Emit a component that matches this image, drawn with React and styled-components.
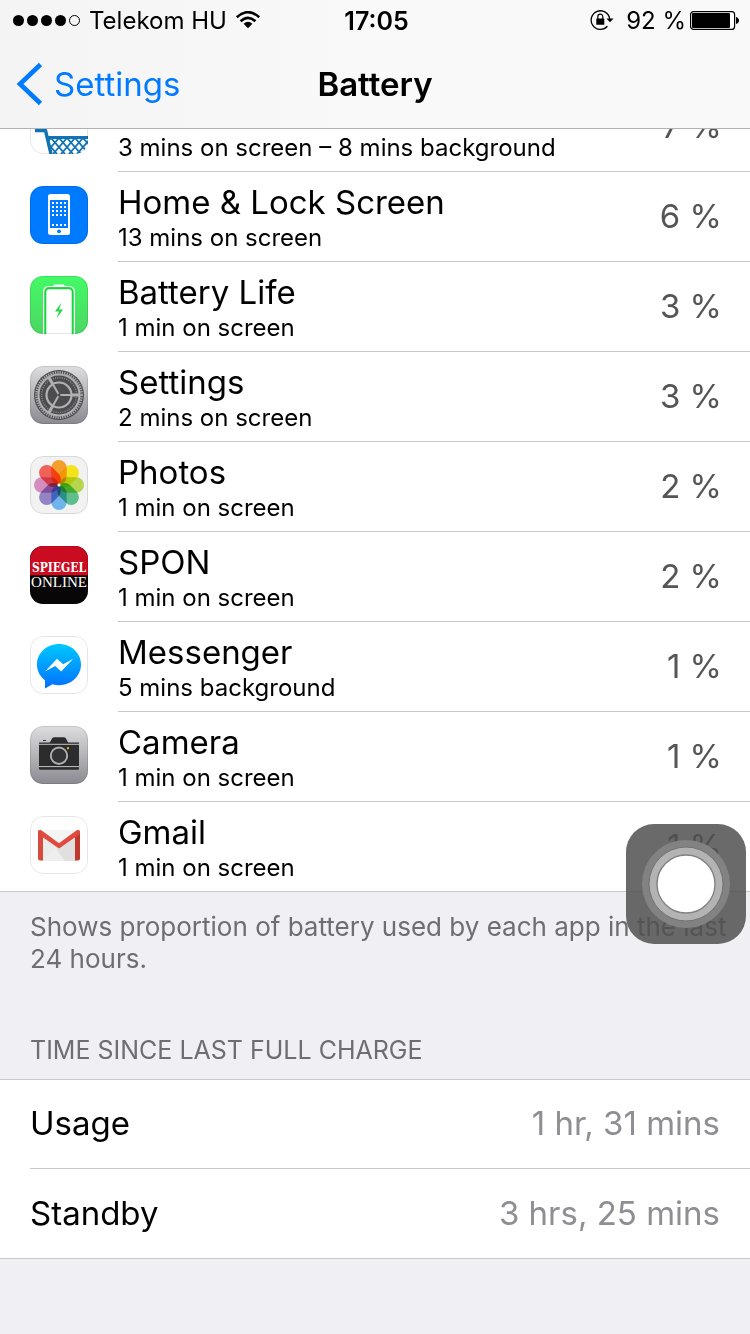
import React from 'react';
import styled, { createGlobalStyle } from 'styled-components';

const GlobalStyle = createGlobalStyle`
  * {
    box-sizing: border-box;
  }

  body {
    margin: 0;
    background-color: #efeff4;
    color: #000;
    font-family: Inter, 'Liberation Sans', sans-serif;
  }

  ul, dl, dd, h1, h2, p {
    margin: 0;
    padding: 0;
  }

  svg {
    display: block;
    flex-shrink: 0;
  }
`;

const Screen = styled.div`
  min-height: 100vh;
`;

const Header = styled.header`
  position: sticky;
  top: 0;
  z-index: 1;
  background: linear-gradient(90deg, #f4f4f4, #f9f9f9 50%);
  border-bottom: 1px solid #b2b2b2;
`;

const StatusBar = styled.div`
  display: grid;
  grid-template-columns: 1fr auto 1fr;
  align-items: center;
  height: 40px;
  padding: 2px 10px 0 13px;
  font-size: 24px;
  line-height: 38px;
`;

const StatusGroup = styled.div`
  display: flex;
  align-items: center;
  justify-content: ${props => (props.$end ? 'flex-end' : 'flex-start')};
  gap: ${props => (props.$end ? '4px' : '8px')};
`;

const ChargeLevel = styled.span`
  padding-left: 8px;
`;

const Clock = styled.time`
  font-size: 25px;
  font-weight: 600;
`;

const NavBar = styled.div`
  display: grid;
  grid-template-columns: 1fr auto 1fr;
  align-items: center;
  height: 88px;
  padding: 0 16px;
`;

const BackButton = styled.button`
  display: flex;
  align-items: center;
  gap: 10px;
  padding: 0;
  border: 0;
  background: none;
  color: #007aff;
  font-family: inherit;
  font-size: 33px;
  line-height: 40px;
`;

const Title = styled.h1`
  font-size: 33px;
  font-weight: 600;
  line-height: 40px;
`;

/* the list is scrolled so its first row sits half under the header */
const AppList = styled.ul`
  margin-top: -47px;
  background-color: #fff;
  border-bottom: 1px solid #c8c7cc;
  list-style: none;
`;

const AppRow = styled.li`
  display: flex;
  padding-left: 30px;
`;

const IconWrapper = styled.div`
  width: 58px;
  height: 58px;
  margin: 14px 30px 0 0;
  border-radius: 13px;
  overflow: hidden;
  position: relative;

  &::after {
    content: '';
    position: absolute;
    inset: 0;
    border: 1px solid rgba(0, 0, 0, 0.1);
    border-radius: 13px;
  }
`;

const AppBody = styled.div`
  flex: 1;
  display: flex;
  align-items: center;
  justify-content: space-between;
  height: 90px;
  padding: 2px 28px 0 0;
  border-bottom: 1px solid #c8c7cc;

  ${AppRow}:last-child & {
    height: 89px;
    border-bottom: 0;
  }
`;

const AppName = styled.div`
  min-height: 40px;
  font-size: 33px;
  line-height: 40px;
`;

const AppTime = styled.div`
  font-size: 24px;
  line-height: 32px;
`;

const Percent = styled.span`
  padding-bottom: 4px;
  color: #555;
  font-size: 33px;
  line-height: 40px;
`;

const FootNote = styled.p`
  padding: 19px 20px 0 30px;
  color: #6d6d72;
  font-size: 26px;
  line-height: 32px;
`;

const SectionTitle = styled.h2`
  padding: 59px 30px 12px;
  color: #6d6d72;
  font-size: 25px;
  font-weight: 400;
  line-height: 33px;
`;

const Details = styled.dl`
  padding-left: 30px;
  background-color: #fff;
  border-top: 1px solid #c8c7cc;
  border-bottom: 1px solid #c8c7cc;
`;

const DetailRow = styled.div`
  display: flex;
  align-items: center;
  justify-content: space-between;
  height: 89px;
  padding: 0 30px 2px 0;
  font-size: 33px;
  line-height: 40px;

  &:not(:last-child) {
    border-bottom: 1px solid #c8c7cc;
  }
`;

const DetailValue = styled.dd`
  color: #8e8e93;
`;

const AssistiveButton = styled.button`
  position: fixed;
  top: 824px;
  right: 4px;
  z-index: 2;
  width: 120px;
  height: 120px;
  padding: 0;
  border: 0;
  border-radius: 28px;
  background-color: rgba(80, 80, 80, 0.85);
`;

const CartIcon = () => (
  <svg width="58" height="58" viewBox="0 0 58 58">
    <clipPath id="basket">
      <path d="M17 41H58V58H21Z" />
    </clipPath>
    <rect width="58" height="58" fill="#fff" />
    <g fill="none" stroke="#1173b4">
      <path d="M5 34.500H15.500L21 58" strokeWidth="3.400" strokeLinejoin="round" />
      <path d="M17 41.500H58" strokeWidth="3" />
      <g clipPath="url(#basket)" strokeWidth="1.800">
        {[13, 21, 29, 37, 45, 53, 61, 69].map(x => (
          <path key={x} d={`M${x - 14} 58L${x} 42L${x + 14} 58`} />
        ))}
      </g>
    </g>
  </svg>
);

const HomeIcon = () => (
  <svg width="58" height="58" viewBox="0 0 58 58">
    <rect width="58" height="58" fill="#007aff" />
    <rect x="18" y="8" width="22" height="41" rx="2.500" fill="#fff" />
    <rect x="20" y="14" width="18" height="28" fill="#007aff" />
    {[16, 20, 24, 28, 38].map(y =>
      [22, 26, 30, 34].map(x => (
        <rect key={`${x}-${y}`} x={x} y={y} width="2" height="2" fill="#fff" />
      ))
    )}
    <circle cx="29" cy="45.300" r="1.900" fill="#007aff" />
  </svg>
);

const BatteryLifeIcon = () => (
  <svg width="58" height="58" viewBox="0 0 58 58">
    <defs>
      <linearGradient id="green" x2="0" y2="1">
        <stop offset="0" stopColor="#43fa66" />
        <stop offset="1" stopColor="#4cd663" />
      </linearGradient>
    </defs>
    <rect width="58" height="58" fill="url(#green)" />
    <path d="M23.500 10.500V9.500Q23.500 8.500 25 8.500H33Q34.500 8.500 34.500 9.500V10.500Z" fill="#fff" />
    <rect x="13.600" y="10.500" width="30.800" height="60" rx="5" fill="#31dd51" stroke="#fff" strokeWidth="1.200" />
    <rect x="15.600" y="12.500" width="26.800" height="60" rx="3.500" fill="#fff" stroke="#15d73c" strokeWidth="1.400" />
    <path d="M31.500 26.500L25 35.500h4l-2.500 7L33 33.500h-4z" fill="#22d548" />
  </svg>
);

const SettingsIcon = () => (
  <svg width="58" height="58" viewBox="0 0 58 58">
    <defs>
      <linearGradient id="steel" x2="0" y2="1">
        <stop offset="0" stopColor="#dedee1" />
        <stop offset="1" stopColor="#8a8a90" />
      </linearGradient>
    </defs>
    <rect width="58" height="58" fill="url(#steel)" />
    <circle cx="29" cy="29" r="25" fill="#4c4c4f" />
    <g fill="none" stroke="#b1b1b5">
      <circle cx="29" cy="29" r="22.600" strokeWidth="2.600" strokeDasharray="1.180 1.186" />
      <circle cx="29" cy="29" r="20.500" strokeWidth="2" />
      <circle cx="29" cy="29" r="17.400" strokeWidth="1.400" strokeDasharray="1 1.278" stroke="#8d8d91" />
      <circle cx="29" cy="29" r="12.500" strokeWidth="2.200" />
      {[0, 120, 240].map(angle => (
        <g key={angle} transform={`rotate(${angle} 29 29)`}>
          <path d="M29 29H41" strokeWidth="2" />
          <path d="M41 29H49" strokeWidth="3" />
        </g>
      ))}
    </g>
    <circle cx="29" cy="29" r="1.500" fill="#4c4c4f" />
  </svg>
);

const petals = [
  '#ffa82f',
  '#fff01d',
  '#bee253',
  '#62ca94',
  '#75bff8',
  '#9b8cd0',
  '#df96c9',
  '#ff665d',
];

const PhotosIcon = () => (
  <svg width="58" height="58" viewBox="0 0 58 58">
    <rect width="58" height="58" fill="#f2f2f2" />
    {petals.map((color, index) => (
      <rect
        key={color}
        x="21.300"
        y="4"
        width="15.400"
        height="24.500"
        rx="7.700"
        fill={color}
        transform={`rotate(${index * 45} 29 29)`}
        style={{ mixBlendMode: 'multiply' }}
      />
    ))}
    <circle cx="29" cy="29" r="1.500" fill="#fff" />
  </svg>
);

const SponIcon = () => (
  <svg width="58" height="58" viewBox="0 0 58 58">
    <rect width="58" height="58" fill="#080606" />
    <rect width="58" height="29.300" fill="#cb0c20" />
    <g fill="#fff" textAnchor="middle">
      <text x="29" y="26" fontFamily="'DejaVu Serif Condensed', 'DejaVu Serif', serif" fontWeight="700" fontSize="12">
        SPIEGEL
      </text>
      <text x="29" y="41" fontFamily="'Liberation Serif', serif" fontSize="15">
        ONLINE
      </text>
    </g>
  </svg>
);

const MessengerIcon = () => (
  <svg width="58" height="58" viewBox="0 0 58 58">
    <defs>
      <linearGradient id="chat" x2="0" y2="1">
        <stop offset="0" stopColor="#00c8ff" />
        <stop offset="1" stopColor="#0070ff" />
      </linearGradient>
    </defs>
    <rect width="58" height="58" fill="#fff" />
    <path
      d="M29 8C16.800 8 7 17 7 28.500C7 35 10 40.500 15 44.200V52.500L22.500 48.300C24.600 48.900 26.700 49.200 29 49.200C41.200 49.200 51 40 51 28.500S41.200 8 29 8Z"
      fill="url(#chat)"
    />
    <path d="M15 35.500L27 22.700L33.200 28.200L43.200 22.700L31.200 35.500L25.200 30Z" fill="#fff" />
  </svg>
);

const CameraIcon = () => (
  <svg width="58" height="58" viewBox="0 0 58 58">
    <rect width="58" height="58" fill="url(#steel)" />
    <path
      d="M9 16.500H19.500C21 16 21.500 11.300 24 11.300H34C36.500 11.300 37 16 38.500 16.500H49V42.500Q49 43.800 47.700 43.800H10.300Q9 43.800 9 42.500Z"
      fill="#2c2c2c"
    />
    <rect x="13" y="14" width="3" height="1" fill="#2c2c2c" />
    <path d="M9 18.300H49M9 40.600H49" stroke="#d5d5d8" strokeWidth="0.900" />
    <circle cx="29" cy="29.700" r="10" fill="#202020" />
    <circle cx="29" cy="29.700" r="8.200" fill="#333" stroke="#aeaeb2" strokeWidth="2" />
    <rect x="37" y="21.200" width="2" height="2" fill="#f5bd18" />
  </svg>
);

const GmailIcon = () => (
  <svg width="58" height="58" viewBox="0 0 58 58">
    <rect width="58" height="58" fill="#fff" />
    <rect x="11" y="14" width="36" height="31" fill="#ebebeb" />
    <path d="M13 45L29 32L47 22V45Z" fill="#dcdcdc" opacity="0.700" />
    <path d="M13 45L25 32L35 45Z" fill="#eee" />
    <path d="M11 14H47L29 27Z" fill="#f4f4f4" />
    <path d="M8 16Q8 14 10 14L13 17V44.500H10Q8 44.500 8 42.500Z" fill="#d54c3f" />
    <path d="M50 16Q50 14 48 14L45 17V44.500H48Q50 44.500 50 42.500Z" fill="#c1392c" />
    <path d="M8 16.500Q8 14 10 14Q11 14 12 14.800L29 27.200L46 14.800Q47 14 48 14Q50 14 50 16.500Q50 18 48.500 19L29 32.500L9.500 19Q8 18 8 16.500Z" fill="#e0493e" />
  </svg>
);

const SignalDots = () => (
  <svg width="68" height="14" viewBox="0 0 68 14" aria-label="Signal 4 of 5">
    {[5.5, 19.5, 33.5, 47.5].map(x => (
      <circle key={x} cx={x} cy="6.500" r="5.500" />
    ))}
    <circle cx="61.500" cy="6.500" r="5" fill="none" stroke="#000" />
  </svg>
);

const WifiIcon = () => (
  <svg width="26" height="20" viewBox="0 0 26 20" aria-label="Wi-Fi">
    <g fill="none" stroke="#000" strokeWidth="2.600">
      <path d="M1.800 6.200Q13 -3.800 24.200 6.200" />
      <path d="M5.600 10.200Q13 3.400 20.400 10.200" />
    </g>
    <path d="M8.600 12.700Q13 9 17.400 12.700L13 17.300Z" />
  </svg>
);

const RotationLockIcon = () => (
  <svg width="24" height="22" viewBox="0 0 24 22" aria-label="Rotation lock">
    <path d="M19.700 9A9.300 9.300 0 1 0 17.400 16.300" fill="none" stroke="#000" strokeWidth="1.300" />
    <path d="M16.500 8.500H23.500L20 12.200Z" />
    <rect x="6.300" y="8.500" width="8" height="6.300" rx="0.500" />
    <path d="M7.800 9V6.700a2.500 2.500 0 0 1 5 0V9" fill="none" stroke="#000" strokeWidth="1.200" />
  </svg>
);

const BatteryIcon = () => (
  <svg width="50" height="20" viewBox="0 0 50 20" aria-label="Battery level">
    <rect x="0.600" y="0.600" width="44" height="17.800" rx="3" fill="#fff" stroke="#000" strokeWidth="1.200" />
    <rect x="2" y="2" width="38" height="15" rx="1" />
    <path d="M46 6Q49 7 49 9.500T46 13Z" />
  </svg>
);

const ChevronIcon = () => (
  <svg width="28" height="44" viewBox="0 0 28 44">
    <path d="M24.500 2.500L4 22L24.500 41.500" fill="none" stroke="#007aff" strokeWidth="4.600" />
  </svg>
);

const TouchRings = () => (
  <svg width="120" height="120" viewBox="0 0 120 120">
    <circle cx="60" cy="60" r="44" fill="#828282" />
    <circle cx="60" cy="60" r="37" fill="#b3b3b3" stroke="#717171" />
    <circle cx="60" cy="60" r="29" fill="#fff" stroke="#828282" strokeWidth="1.400" />
  </svg>
);

const apps = [
  { name: '', time: '3 mins on screen – 8 mins background', percent: 7, Icon: CartIcon },
  { name: 'Home & Lock Screen', time: '13 mins on screen', percent: 6, Icon: HomeIcon },
  { name: 'Battery Life', time: '1 min on screen', percent: 3, Icon: BatteryLifeIcon },
  { name: 'Settings', time: '2 mins on screen', percent: 3, Icon: SettingsIcon },
  { name: 'Photos', time: '1 min on screen', percent: 2, Icon: PhotosIcon },
  { name: 'SPON', time: '1 min on screen', percent: 2, Icon: SponIcon },
  { name: 'Messenger', time: '5 mins background', percent: 1, Icon: MessengerIcon },
  { name: 'Camera', time: '1 min on screen', percent: 1, Icon: CameraIcon },
  { name: 'Gmail', time: '1 min on screen', percent: 1, Icon: GmailIcon },
];

const App = () => {
  return (
    <Screen>
      <GlobalStyle />
      <Header>
        <StatusBar>
          <StatusGroup>
            <SignalDots />
            <span>Telekom HU</span>
            <WifiIcon />
          </StatusGroup>
          <Clock>17:05</Clock>
          <StatusGroup $end>
            <RotationLockIcon />
            <ChargeLevel>92 %</ChargeLevel>
            <BatteryIcon />
          </StatusGroup>
        </StatusBar>
        <NavBar>
          <BackButton type="button">
            <ChevronIcon />
            Settings
          </BackButton>
          <Title>Battery</Title>
        </NavBar>
      </Header>
      <main>
        <AppList>
          {apps.map(({ name, time, percent, Icon }) => (
            <AppRow key={name}>
              <IconWrapper>
                <Icon />
              </IconWrapper>
              <AppBody>
                <div>
                  <AppName>{name}</AppName>
                  <AppTime>{time}</AppTime>
                </div>
                <Percent>{percent} %</Percent>
              </AppBody>
            </AppRow>
          ))}
        </AppList>
        <FootNote>
          Shows proportion of battery used by each app in the last 24 hours.
        </FootNote>
        <SectionTitle>TIME SINCE LAST FULL CHARGE</SectionTitle>
        <Details>
          <DetailRow>
            <dt>Usage</dt>
            <DetailValue>1 hr, 31 mins</DetailValue>
          </DetailRow>
          <DetailRow>
            <dt>Standby</dt>
            <DetailValue>3 hrs, 25 mins</DetailValue>
          </DetailRow>
        </Details>
      </main>
      <AssistiveButton type="button" aria-label="AssistiveTouch">
        <TouchRings />
      </AssistiveButton>
    </Screen>
  );
};

export default App;
